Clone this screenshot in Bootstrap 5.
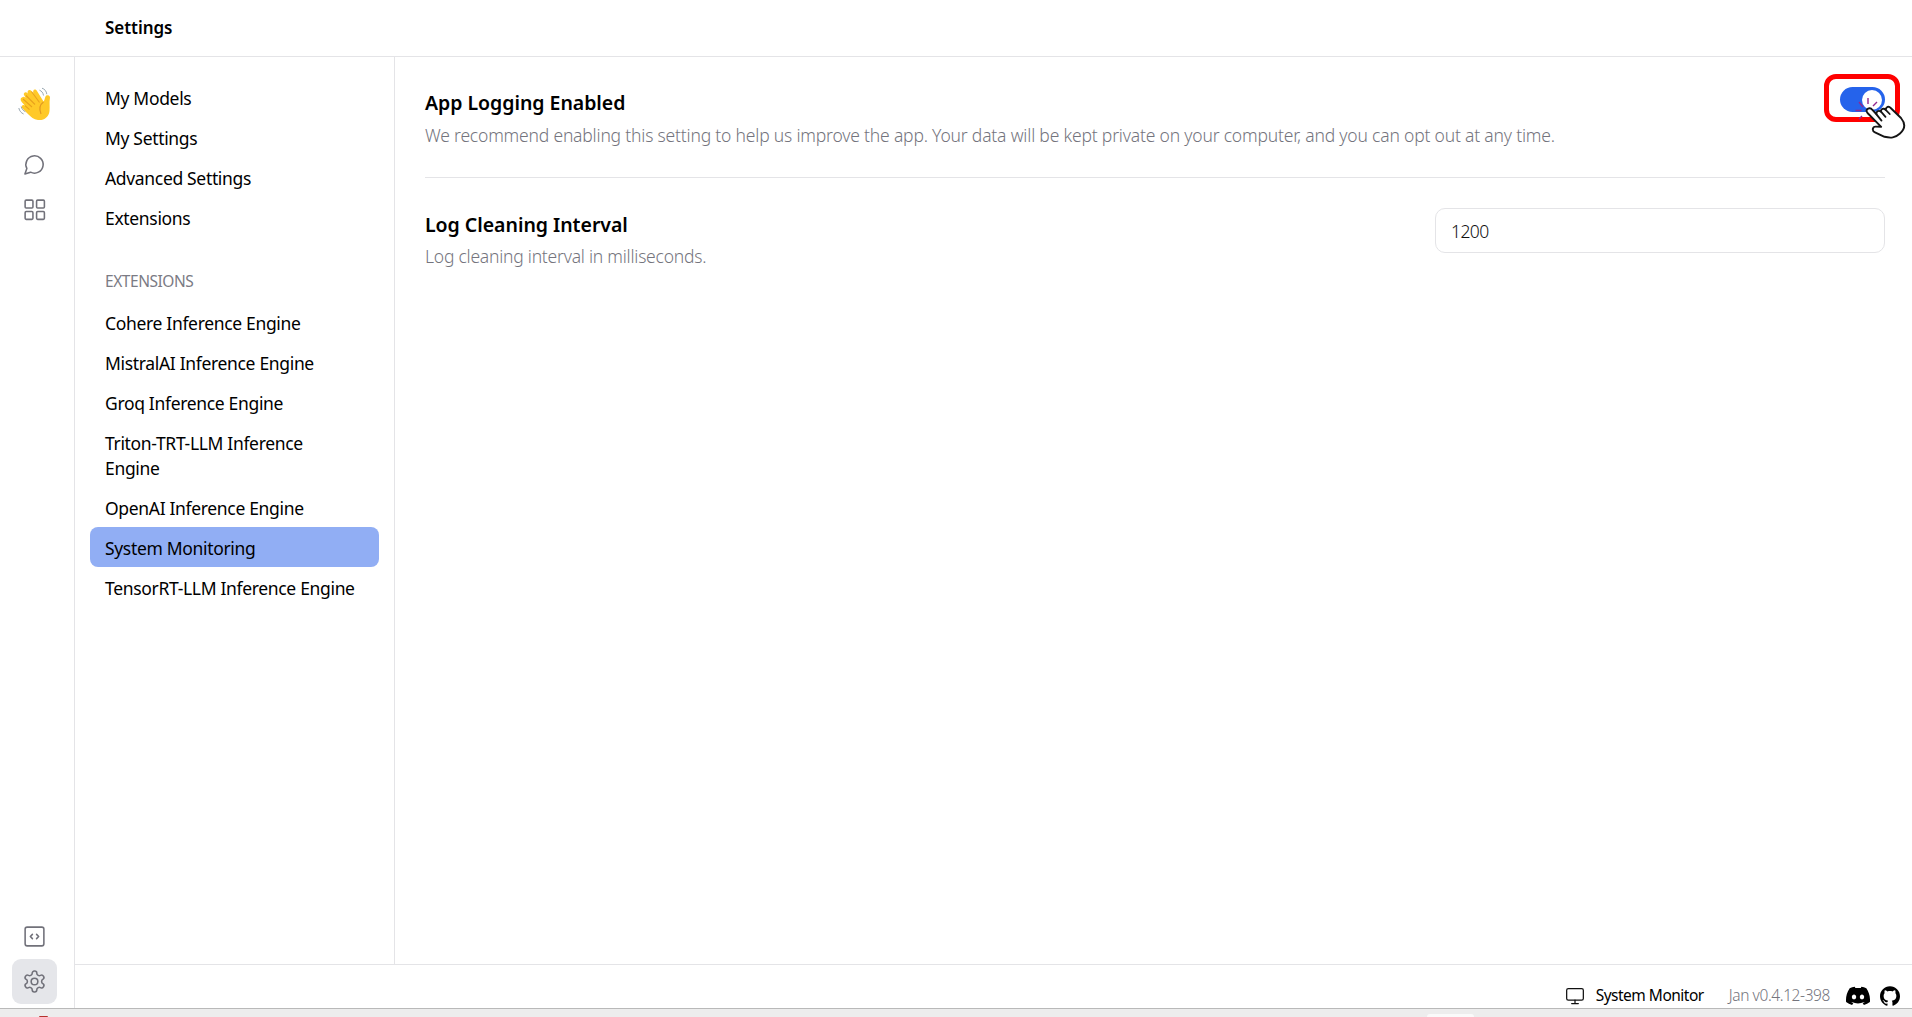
<!DOCTYPE html>
<html lang="en">
<head>
<meta charset="utf-8">
<title>Settings</title>
<link href="https://cdn.jsdelivr.net/npm/bootstrap@5.3.0/dist/css/bootstrap.min.css" rel="stylesheet">
<style>
:root { --line: #e4e4e7; --muted: #7b7b84; }
body { font-family: "Noto Sans", "Open Sans", sans-serif; font-size: 17.5px; line-height: 25px; color: #000; background: #fff; letter-spacing: -.33px; }
.topbar { height: 57px; padding: 0 0 1px 105px; border-bottom: 1px solid var(--line); font-size: 17px; font-weight: 600; letter-spacing: -.05px; }
.rail { width: 75px; border-right: 1px solid var(--line); padding: 24px 0 4px 12px; color: #71717a; }
.rail .tile { width: 45px; height: 45px; border-radius: 9px; }
.rail .tile.active { background: #e5e6ea; }
.rail .chat { margin-top: 16px; }
.settings-nav { width: 320px; border-right: 1px solid var(--line); padding: 20px 15px; }
.settings-nav .nav-link { color: #000; padding: 9px 15px 6px; border-radius: 8px; font-weight: 450; }
.settings-nav .nav-link.active { background: #91aef4; color: #000; }
.group-label { font-size: 15.5px; color: var(--muted); padding: 0 15px; margin: 32px 0 8px; letter-spacing: -.45px; }
.panel { padding: 29px 27px 0 30px; }
.panel h2 { font-size: 19.5px; line-height: 27px; font-weight: 600; margin: 3px 0 4px; letter-spacing: -.03px; }
.panel p { color: #74747d; margin: 6px 0 0; line-height: 27px; font-weight: 360; letter-spacing: -.19px; white-space: nowrap; }
.setting + .setting { border-top: 1px solid var(--line); margin-top: 28px; padding-top: 30px; }
.setting + .setting p { margin-top: 5px; letter-spacing: -.23px; }
.interval { width: 450px; height: 45px; border: 1px solid var(--line); border-radius: 10px; padding: 1px 15px 0; font-size: 17.5px; font-weight: 350; color: #111; letter-spacing: -.6px; }
.toggle-wrap { position: relative; width: 45px; height: 25px; margin-top: 1px; }
.toggle { width: 45px; height: 25px; border-radius: 13px; background: #2563eb; padding: 3px; }
.toggle i { width: 20px; height: 20px; border-radius: 50%; background: #fff; }
.ring { position: absolute; left: -16px; top: -13px; width: 76px; height: 48px; border: 5px solid #f00; border-radius: 12px; }
.pointer { position: absolute; left: 14px; top: 5px; }
.statusbar { height: 44px; border-top: 1px solid var(--line); padding: 18px 12px 0 0; font-size: 15.5px; letter-spacing: -.4px; }
.screen-icon { margin-right: 11px; }
.monitor { font-weight: 450; letter-spacing: -.5px; margin-right: 25px; }
.version { font-weight: 360; color: #74747d; margin-right: 16px; }
.discord { margin-right: 10px; }
.taskbar { height: 9px; border-top: 1px solid #b9b9b9; background: #ededed; padding: 0 438px 0 39px; }
.task-mark { width: 9px; height: 1px; border-radius: 4px 4px 0 0; background: #b5322c; }
.task-tab { width: 47px; height: 3px; border-radius: 3px 3px 0 0; background: #fafafa; }
</style>
</head>
<body>
<div class="d-flex flex-column vh-100 overflow-hidden">
  <header class="topbar d-flex align-items-center flex-shrink-0"><span>Settings</span></header>
  <div class="d-flex flex-grow-1">
    <aside class="rail d-flex flex-column flex-shrink-0">
      <div class="tile d-flex align-items-center justify-content-center">
        <svg width="34" height="34" viewBox="0 0 34 34" fill="none">
          <path d="M4 10.500c1.500-1.500 3-.5 4 1L6 8c-1-2 1.500-4 3.500-2L10 7C8.500 3.500 11.500 2 13.500 4l2 3C14 3 17 1 19 4l6.500 10.500c1.500-.5 1-5.500 3.300-6.200 2.200-.7 3.700 1 3.100 3.200-.8 4 .1 7.500-.4 12.500-.6 6-5.500 9.700-11.500 9-4.500-.5-7-3-9.500-5.500L4.500 21.500c-2-2.200.5-4.700 2.500-2.800L3.700 15C2 12.800 2.500 11 4 10.500z" fill="#ffc928"/>
          <path d="M7 18.700l4.500 4M5 12l9 8M8 8.500l9 9M13.500 4.500l8 11" stroke="#e9a21d" stroke-width="1.100"/>
          <path d="M25.500 15c-3.500 2.500-4.500 7-2.500 12" stroke="#e39a22" stroke-width="1.200"/>
          <path d="M21.500 3.200c2.200.8 3.500 2.400 4 5.300M24 1.200c2.800.9 4.400 3 4.800 6M3.200 19.500c.6 2.600 2 4.200 4.200 5.200M.8 21c.7 3 2.400 5 4.800 6" stroke="#9aa8b2" stroke-width="1"/>
        </svg>
      </div>
      <div class="tile chat d-flex align-items-center justify-content-center">
        <svg width="23" height="23" viewBox="0 0 24 24" fill="none" stroke="currentColor" stroke-width="1.600" stroke-linecap="round" stroke-linejoin="round"><path d="M7.900 20A9 9 0 1 0 4 16.100L2 22Z"/></svg>
      </div>
      <div class="tile d-flex align-items-center justify-content-center">
        <svg width="25" height="25" viewBox="0 0 24 24" fill="none" stroke="currentColor" stroke-width="1.500" stroke-linejoin="round"><rect x="3" y="3" width="7.500" height="7.500" rx="1"/><rect x="14" y="3" width="7.500" height="7.500" rx="1"/><rect x="14" y="14" width="7.500" height="7.500" rx="1"/><rect x="3" y="14" width="7.500" height="7.500" rx="1"/></svg>
      </div>
      <div class="tile d-flex align-items-center justify-content-center mt-auto">
        <svg width="25" height="25" viewBox="0 0 24 24" fill="none" stroke="currentColor" stroke-width="1.500" stroke-linecap="round" stroke-linejoin="round"><rect x="3" y="3" width="18" height="18" rx="2"/><path d="m10 10-2 2 2 2M14 14l2-2-2-2"/></svg>
      </div>
      <div class="tile active d-flex align-items-center justify-content-center">
        <svg width="25" height="25" viewBox="0 0 24 24" fill="none" stroke="currentColor" stroke-width="1.500" stroke-linecap="round" stroke-linejoin="round"><path d="M12.220 2h-.44a2 2 0 0 0-2 2v.18a2 2 0 0 1-1 1.730l-.43.25a2 2 0 0 1-2 0l-.15-.08a2 2 0 0 0-2.730.73l-.22.38a2 2 0 0 0 .73 2.730l.15.1a2 2 0 0 1 1 1.720v.51a2 2 0 0 1-1 1.740l-.15.09a2 2 0 0 0-.73 2.730l.22.38a2 2 0 0 0 2.730.73l.15-.08a2 2 0 0 1 2 0l.43.25a2 2 0 0 1 1 1.730V20a2 2 0 0 0 2 2h.44a2 2 0 0 0 2-2v-.18a2 2 0 0 1 1-1.730l.43-.25a2 2 0 0 1 2 0l.15.08a2 2 0 0 0 2.730-.73l.22-.39a2 2 0 0 0-.73-2.730l-.15-.08a2 2 0 0 1-1-1.740v-.5a2 2 0 0 1 1-1.740l.15-.09a2 2 0 0 0 .73-2.730l-.22-.38a2 2 0 0 0-2.730-.73l-.15.08a2 2 0 0 1-2 0l-.43-.25a2 2 0 0 1-1-1.730V4a2 2 0 0 0-2-2z"/><circle cx="12" cy="12" r="3.200"/></svg>
      </div>
    </aside>
    <div class="d-flex flex-column flex-grow-1">
      <div class="d-flex flex-grow-1">
        <nav class="settings-nav flex-shrink-0">
          <div class="nav flex-column">
            <a class="nav-link">My Models</a>
            <a class="nav-link">My Settings</a>
            <a class="nav-link">Advanced Settings</a>
            <a class="nav-link">Extensions</a>
          </div>
          <div class="group-label">EXTENSIONS</div>
          <div class="nav flex-column">
            <a class="nav-link">Cohere Inference Engine</a>
            <a class="nav-link">MistralAI Inference Engine</a>
            <a class="nav-link">Groq Inference Engine</a>
            <a class="nav-link">Triton-TRT-LLM Inference<br>Engine</a>
            <a class="nav-link">OpenAI Inference Engine</a>
            <a class="nav-link active">System Monitoring</a>
            <a class="nav-link text-nowrap">TensorRT-LLM Inference Engine</a>
          </div>
        </nav>
        <main class="panel flex-grow-1">
          <section class="setting d-flex justify-content-between align-items-start">
            <div>
              <h2>App Logging Enabled</h2>
              <p>We recommend enabling this setting to help us improve the app. Your data will be kept private on your computer, and you can opt out at any time.</p>
            </div>
            <div class="toggle-wrap">
              <div class="toggle d-flex justify-content-end"><i></i></div>
              <div class="ring"></div>
              <svg class="pointer" width="54" height="48" viewBox="0 0 54 48" fill="none">
                <path d="M14 6v6M23 10l-4 4M5 10l4 5M1.500 18.500h6M5 27l3-3" stroke="#92278f" stroke-width="1.400"/>
                <path d="M13 17.500c1.500-2 4-1.500 5.200.2l4.300 4.700c-.5-3 2-4.500 4.500-2.800-.4-2.500 2.700-4 4.700-1.800.2-2.700 3-4.300 5-1.800L47 26c5 6 4 11-1 15.500-5 4.500-9 4.800-15.500 3.300l-9.500-4.500c-3.500-1.500-2.500-6 1-5.700l5.200.2L13.500 21c-1-1.200-1.200-2.500-.5-3.500z" fill="#fff" stroke="#151515" stroke-width="1.900" stroke-linejoin="round"/>
                <path d="M22.500 22.400l5 6.200M27 19.600l4.500 5.200M31.700 17.800l4 4.200" stroke="#151515" stroke-width="1.800" stroke-linecap="round"/>
              </svg>
            </div>
          </section>
          <section class="setting d-flex justify-content-between align-items-start">
            <div>
              <h2>Log Cleaning Interval</h2>
              <p>Log cleaning interval in milliseconds.</p>
            </div>
            <input class="interval form-control" type="text" value="1200">
          </section>
        </main>
      </div>
      <footer class="statusbar d-flex align-items-center justify-content-end">
        <svg class="screen-icon" width="20" height="20" viewBox="0 0 24 24" fill="none" stroke="#111" stroke-width="1.500" stroke-linecap="round" stroke-linejoin="round"><rect x="2" y="3" width="20" height="14" rx="2"/><path d="M8 21h8M12 17v4"/></svg>
        <span class="monitor">System Monitor</span>
        <span class="version">Jan v0.4.12-398</span>
        <svg class="discord" width="24" height="24" viewBox="0 0 24 24" fill="#000"><path d="M20.317 4.370a19.800 19.800 0 0 0-4.885-1.515c-.211.375-.444.864-.608 1.250a18.270 18.270 0 0 0-5.487 0 12.600 12.600 0 0 0-.617-1.250A19.740 19.740 0 0 0 3.677 4.370C.533 9.046-.32 13.580.099 18.057a19.900 19.900 0 0 0 5.993 3.030c.462-.63.874-1.295 1.226-1.994a13 13 0 0 1-1.872-.892l.371-.292a14.200 14.200 0 0 0 12.366 0l.374.292a12.300 12.300 0 0 1-1.873.892c.36.698.772 1.362 1.225 1.993a19.840 19.840 0 0 0 6.002-3.030c.5-5.177-.838-9.674-3.594-13.687zM8.020 15.330c-1.183 0-2.157-1.085-2.157-2.419s.955-2.419 2.157-2.419c1.210 0 2.176 1.096 2.157 2.420 0 1.333-.956 2.418-2.157 2.418zm7.975 0c-1.183 0-2.157-1.085-2.157-2.419s.955-2.419 2.157-2.419c1.210 0 2.176 1.096 2.157 2.420 0 1.333-.946 2.418-2.157 2.418z"/></svg>
        <svg width="20" height="20" viewBox="0 0 24 24" fill="#000"><path d="M12 .297c-6.630 0-12 5.373-12 12 0 5.303 3.438 9.800 8.205 11.385.6.113.82-.258.82-.577 0-.285-.01-1.040-.015-2.040-3.338.724-4.042-1.610-4.042-1.610C4.422 18.070 3.633 17.700 3.633 17.700c-1.087-.744.084-.729.084-.729 1.205.084 1.838 1.236 1.838 1.236 1.070 1.835 2.809 1.305 3.495.998.108-.776.417-1.305.76-1.605-2.665-.3-5.466-1.332-5.466-5.930 0-1.310.465-2.380 1.235-3.220-.135-.303-.54-1.523.105-3.176 0 0 1.005-.322 3.300 1.230.96-.267 1.980-.399 3-.405 1.020.006 2.040.138 3 .405 2.280-1.552 3.285-1.230 3.285-1.230.645 1.653.24 2.873.12 3.176.765.840 1.230 1.910 1.230 3.220 0 4.610-2.805 5.625-5.475 5.920.42.360.81 1.096.81 2.220 0 1.606-.015 2.896-.015 3.286 0 .315.210.690.825.570C20.565 22.092 24 17.592 24 12.297c0-6.627-5.373-12-12-12"/></svg>
      </footer>
    </div>
  </div>
  <div class="taskbar flex-shrink-0 d-flex justify-content-between align-items-end"><i class="task-mark"></i><i class="task-tab"></i></div>
</div>
<script src="https://cdn.jsdelivr.net/npm/bootstrap@5.3.0/dist/js/bootstrap.bundle.min.js"></script>
</body>
</html>
